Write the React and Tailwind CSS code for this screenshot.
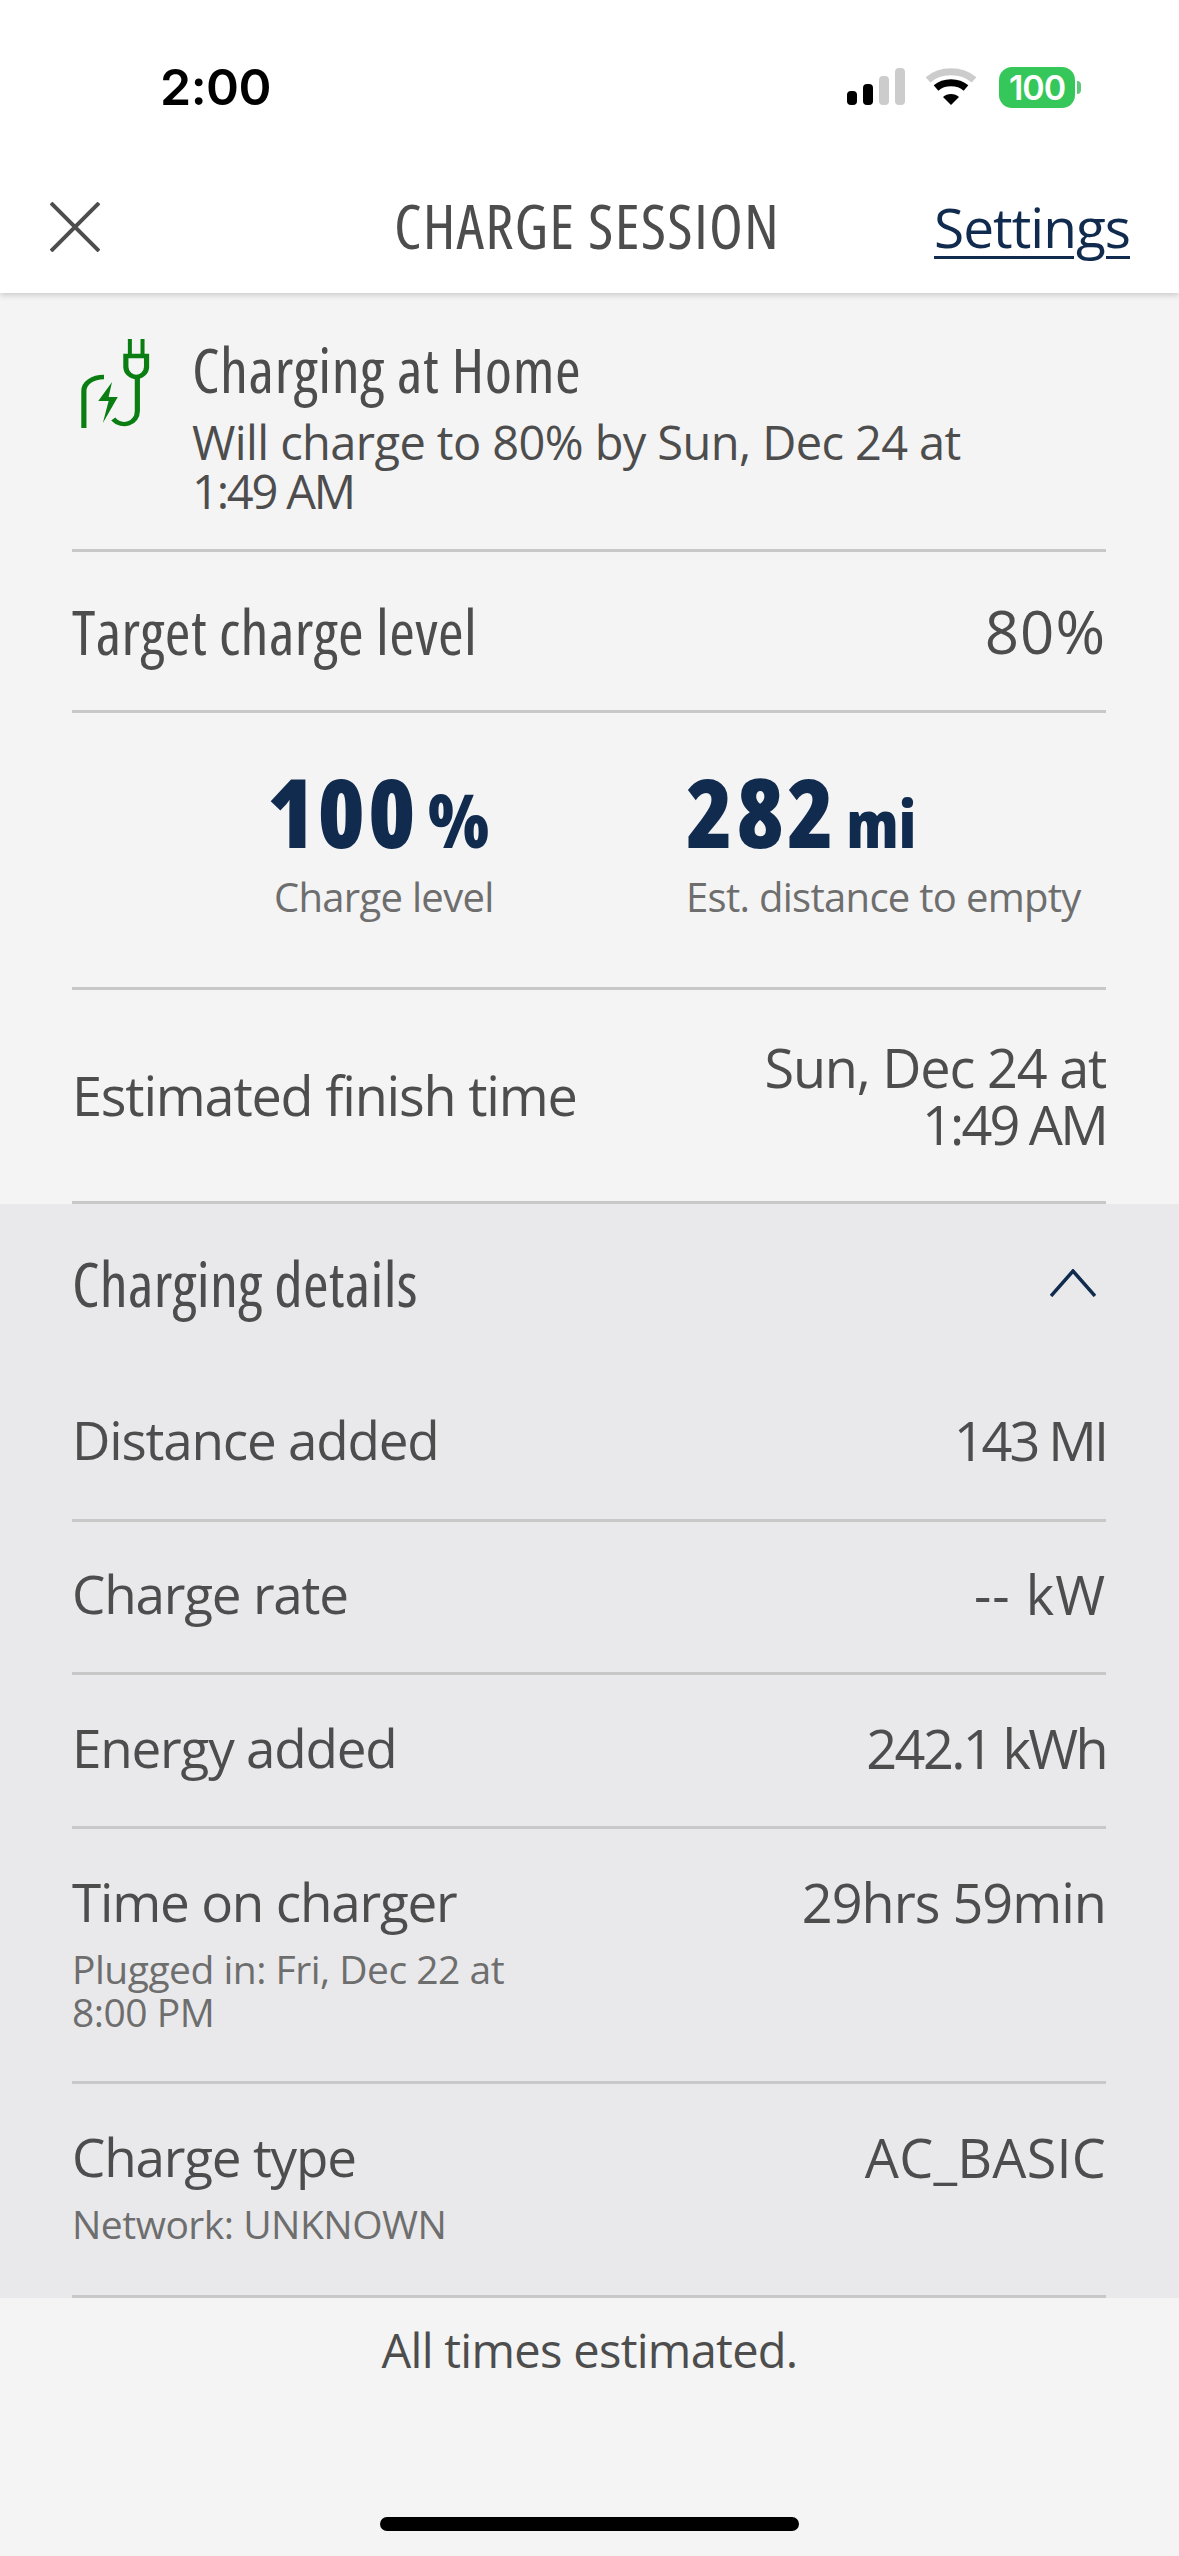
const body = "font-['Open_Sans','Noto_Sans',sans-serif]";

function Row({ label, value, sub, h, top, vt = "tracking-[-1px]" }) {
  return (
    <div className={`flex justify-between border-b-[3px] border-[#c8c8c8] ${h}`}>
      <div className={top}>
        <div className="text-[53px] leading-[56px] text-[#4d4d4d] tracking-[-1.2px]">{label}</div>
        {sub && <div className="mt-[17px] text-[39px] leading-[43px] text-[#6e6e6e] tracking-[-0.5px] w-[480px]">{sub}</div>}
      </div>
      <div className={`${top} text-[54px] leading-[56px] text-[#4d4d4d] ${vt}`}>{value}</div>
    </div>
  );
}

export default function App() {
  return (
    <div className={`w-[1179px] h-[2556px] bg-[#f4f4f4] overflow-hidden relative ${body}`}>
      <header className="relative z-10 bg-white h-[293px] shadow-[0_2px_6px_rgba(0,0,0,0.18)]">
        <div className="h-[174px] flex items-center justify-between pl-[160px] pr-[98px]">
          <span className="text-[50px] font-semibold text-black font-['Inter',sans-serif] tracking-[-0.5px]">2:00</span>
          <div className="flex items-center gap-[20px]">
            <svg width="60" height="38" viewBox="0 0 60 38">
              <rect x="1" y="23" width="10" height="14" rx="4" fill="#000" />
              <rect x="17" y="16" width="10" height="21" rx="4" fill="#000" />
              <rect x="33" y="8" width="10" height="29" rx="4" fill="#ccc" />
              <rect x="49" y="0" width="10" height="37" rx="4" fill="#ccc" />
            </svg>
            <svg width="50" height="38" viewBox="0 0 50 38">
              <path d="M2 12 C14 1 36 1 48 12" stroke="#ccc" strokeWidth="7" fill="none" />
              <path d="M10 20 C18 13 32 13 40 20" stroke="#000" strokeWidth="7" fill="none" />
              <path d="M17 29 C21 25 29 25 33 29 L25 37 Z" fill="#000" />
            </svg>
            <div className="flex items-center ml-[3px]">
              <div className="w-[76px] h-[41px] rounded-[13px] bg-[#35c759] text-white text-[34px] leading-[41px] font-semibold text-center font-['Inter',sans-serif] tracking-[-1px]">100</div>
              <div className="ml-[2px] w-[4px] h-[13px] rounded-r-full bg-[#5cc97a]" />
            </div>
          </div>
        </div>
        <div className="flex items-center justify-between h-[106px] pl-[50px] pr-[49px] relative">
          <svg width="50" height="50" viewBox="0 0 50 50" className="stroke-[#4d4d4d]">
            <path d="M1 1 L49 49 M49 1 L1 49" strokeWidth="4" fill="none" />
          </svg>
          <span className="absolute left-[394px] top-[21px] text-[62px] leading-[60px] text-[#4d4d4d] font-stretch-condensed tracking-[1.2px]">CHARGE SESSION</span>
          <a className="text-[55px] leading-[56px] text-[#102b4e] underline underline-offset-[8px] decoration-[3px] tracking-[-1px]">Settings</a>
        </div>
      </header>

      <section className="px-[72px] pr-[73px]">
        <div className="flex h-[259px] border-b-[3px] border-[#c8c8c8]">
          <svg width="69" height="92" viewBox="0 0 60 92" preserveAspectRatio="none" className="ml-[9px] mt-[46px] shrink-0" fill="none" stroke="#0a7e12">
            <path d="M42.5 0V16 M53.5 0V16" strokeWidth="3.5" />
            <path d="M39 17H57V28C57 34 52 38 48 38C44 38 39 34 39 28Z" strokeWidth="4.5" />
            <path d="M49 38V72C49 84 36 90 28 80" strokeWidth="4.5" />
            <path d="M2.5 89V52C2.5 44 10 38 20 38" strokeWidth="4.5" />
            <path d="M27 43L15 62H24L19 84L32 58H24Z" fill="#0a7e12" stroke="none" />
          </svg>
          <div className="ml-[42px] pt-[43px] w-[820px]">
            <div className="text-[62px] leading-[66px] text-[#4d4d4d] font-stretch-condensed tracking-[0.6px]">Charging at Home</div>
            <div className="mt-[16px] text-[47px] leading-[49px] text-[#4d4d4d] tracking-[-0.6px]">Will charge to 80% by Sun, Dec 24 at <span className="tracking-[-2.2px]">1:49 AM</span></div>
          </div>
        </div>
        <div className="flex items-center justify-between h-[161px] border-b-[3px] border-[#c8c8c8] text-[#4d4d4d]">
          <span className="text-[62px] font-stretch-condensed tracking-[0.4px]">Target charge level</span>
          <span className="text-[60px] tracking-[1px]">80%</span>
        </div>
        <div className="flex h-[277px] border-b-[3px] border-[#c8c8c8]">
          <div className="ml-[195px] w-[419px] pt-[44px]">
            <div className="text-[#102b4e] font-extrabold flex items-baseline leading-[108px] h-[108px]">
              <span className="text-[96px] font-stretch-condensed tracking-[3px]">100</span>
              <span className="ml-[9px] text-[74px] font-stretch-condensed">%</span>
            </div>
            <div className="mt-[8px] text-[40px] leading-[48px] text-[#6e6e6e] ml-[7px] tracking-[-0.7px]">Charge level</div>
          </div>
          <div className="pt-[44px]">
            <div className="text-[#102b4e] font-extrabold flex items-baseline leading-[108px] h-[108px]">
              <span className="text-[96px] font-stretch-condensed tracking-[3px]">282</span>
              <span className="ml-[9px] text-[66px] font-stretch-condensed">mi</span>
            </div>
            <div className="mt-[8px] text-[40px] leading-[48px] text-[#6e6e6e] tracking-[-0.7px]">Est. distance to empty</div>
          </div>
        </div>
        <div className="flex items-center justify-between h-[214px] border-b-[3px] border-[#c8c8c8] text-[#4d4d4d]">
          <span className="text-[54px] tracking-[-1.2px]">Estimated finish time</span>
          <span className="text-[54px] leading-[57px] tracking-[-1.2px] text-right">Sun, Dec 24 at<br /><span className="tracking-[-2.8px]">1:49 AM</span></span>
        </div>
      </section>

      <section className="bg-[#e9e9eb] h-[1094px] px-[72px] pr-[73px]">
        <div className="flex items-center justify-between h-[161px] text-[#4d4d4d] pb-[3px]">
          <span className="text-[62px] font-stretch-condensed tracking-[0.3px]">Charging details</span>
          <svg width="46" height="28" viewBox="0 0 46 28" className="mr-[10px]">
            <path d="M1 27 L23 2 L45 27" stroke="#102b4e" strokeWidth="3.5" fill="none" />
          </svg>
        </div>
        <Row label="Distance added" value="143 MI" vt="tracking-[-3px]" h="h-[157px]" top="pt-[47px]" />
        <Row label="Charge rate" value="-- kW" vt="tracking-[1px]" h="h-[153px]" top="pt-[44px]" />
        <Row label="Energy added" value="242.1 kWh" vt="tracking-[-2.6px]" h="h-[154px]" top="pt-[45px]" />
        <Row label="Time on charger" value="29hrs 59min" h="h-[255px]" sub="Plugged in: Fri, Dec 22 at 8:00 PM" top="pt-[45px]" />
        <Row label="Charge type" value="AC_BASIC" vt="tracking-[0.2px]" sub="Network: UNKNOWN" h="h-[214px]" top="pt-[45px]" />
      </section>

      <p className="mt-[24px] text-center text-[47px] leading-[56px] text-[#4d4d4d] tracking-[-0.7px]">All times estimated.</p>
      <div className="absolute left-[380px] top-[2517px] w-[419px] h-[14px] rounded-full bg-black" />
    </div>
  );
}
